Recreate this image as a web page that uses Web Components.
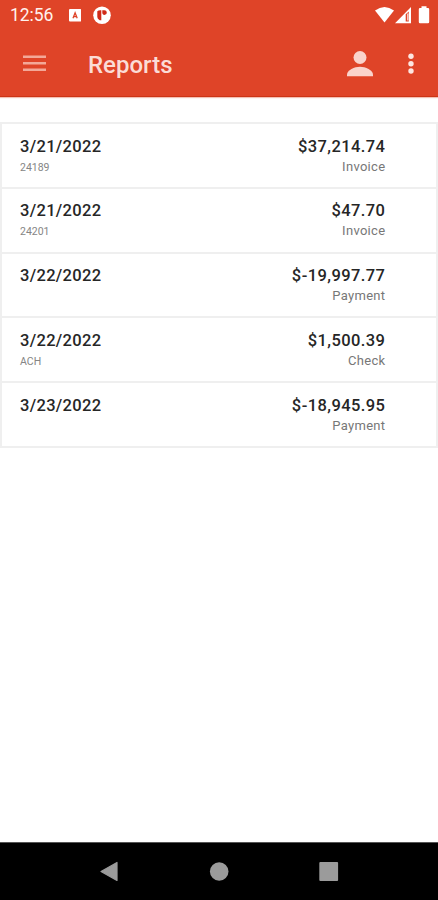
<!DOCTYPE html>
<html lang="en">
<head>
<meta charset="utf-8">
<title>Reports</title>
<style>
html,body{margin:0;height:100%;background:#fff}
body{font-family:Roboto,"Liberation Sans",sans-serif;overflow:hidden}
</style>
</head>
<body>
<reports-screen></reports-screen>
<script>
const define = (name, html) => customElements.define(name, class extends HTMLElement {
  constructor() {
    super();
    const t = document.createElement('template');
    t.innerHTML = html;
    this.attachShadow({ mode: 'open' }).append(t.content.cloneNode(true));
  }
});

define('status-bar', `
<style>
:host{display:flex;align-items:center;height:31px;box-sizing:border-box;padding:0 8px 0 10px;color:#fff}
time{font-size:17.5px;line-height:31px;width:59px;letter-spacing:-.05px;color:#fff2ee}
svg{display:block}
.app{margin-right:12px}
.right{margin-left:auto}
</style>
<time>12:56</time>
<svg class="app" width="12" height="31" viewBox="0 0 12 31"><rect y="9" width="12.300" height="12.500" rx="1" fill="#fff"/><path d="M4 18.300 6.100 12.800 8.200 18.300M4.900 16.700h2.400" fill="none" stroke="#de4428" stroke-width="1.300"/></svg>
<svg width="18" height="31" viewBox="0 0 18 31"><circle cx="9" cy="15.2" r="8.8" fill="#fff"/><path d="M4.300 11.300Q5.500 10 8.300 10.300v10H6.700Q4.300 19 4.300 17z" fill="#d02a18"/><path d="M9.300 10.300h2.200a2.300 2.300 0 1 1-2.200 3z" fill="#d02a18"/></svg>
<svg class="right" width="56" height="31" viewBox="374 0 56 31" fill="#fff"><path d="M375 10.500Q384.500 3.500 394 10.500L384.500 22.500z"/><path fill-rule="evenodd" d="M411 7v16.300H395zM405.700 14.200v7.300h3.100V11.500z"/><path d="M407.300 13.500h1.100v7h-1.100z"/><path d="M421.500 8v-1.700h5V8h1.500q1.200 0 1.200 1.200v12.700q0 1.300-1.200 1.300h-8q-1.200 0-1.200-1.300V9.200Q418.800 8 420 8z"/></svg>
`);

define('app-bar', `
<style>
:host{display:flex;align-items:center;height:66px;box-sizing:border-box;padding:1px 20px 0 22px;border-bottom:1px solid #cc3516}
h1{margin:0 auto 0 42px;font-size:24px;line-height:64px;font-weight:500;color:#fbdcd6;padding-top:1px}
svg{display:block}
.user{margin-right:33px}
</style>
<svg width="24" height="20" viewBox="0 0 24 20" fill="#f3a898"><path d="M1 1.400h23v2.500H1zM1 7.900h23v2.500H1zM1 14.400h23v2.500H1z"/></svg>
<h1>Reports</h1>
<svg class="user" width="26" height="26" viewBox="0 0 26 26" fill="#fad3cb"><circle cx="13" cy="6.500" r="6.500"/><path d="M0 25.200v-1.500c0-4.700 7.500-8 13-8s13 3.300 13 8v1.500z"/></svg>
<svg width="12" height="24" viewBox="0 0 12 24" fill="#fde6e1"><circle cx="5" cy="4.300" r="2.700"/><circle cx="5" cy="11.700" r="2.700"/><circle cx="5" cy="19" r="2.700"/></svg>
`);

define('report-row', `
<style>
:host{display:flex;justify-content:space-between;height:64.800px;box-sizing:border-box;padding:12.600px 51px 0 18px;border-bottom:2px solid #efefef}
.main{font-size:16.500px;line-height:20px;font-weight:500;color:#262626;letter-spacing:.32px}
.ref{font-size:10.500px;line-height:21px;color:#858585}
.kind{font-size:13px;line-height:20px;color:#777;letter-spacing:.3px}
.end{text-align:right}
.end .main{letter-spacing:.42px}
.end .main,.end .kind{margin-right:-.4px}
</style>
<div><div class="main"><slot name="date"></slot></div><div class="ref"><slot name="ref"></slot></div></div>
<div class="end"><div class="main"><slot name="amount"></slot></div><div class="kind"><slot></slot></div></div>
`);

define('report-list', `
<style>:host{display:block;margin-top:25px;border:2px solid #efefef;border-bottom:0}</style>
<slot></slot>
`);

define('nav-bar', `
<style>
:host{display:flex;align-items:center;justify-content:space-between;height:58px;box-sizing:border-box;padding:0 99px;background:#000;border-top:1px solid #555}
svg{display:block}
</style>
<svg width="20" height="22" viewBox="0 0 20 22"><path d="M2 10.500 18 1.500v18z" fill="#9b9b9b" stroke="#9b9b9b" stroke-width="1.200" stroke-linejoin="round"/></svg>
<svg width="20" height="22" viewBox="0 0 20 22"><circle cx="10.200" cy="10.500" r="9.300" fill="#9b9b9b"/></svg>
<svg width="20" height="22" viewBox="0 0 20 22"><rect x=".3" y="1" width="18.800" height="19" rx="1" fill="#9b9b9b"/></svg>
`);

define('reports-screen', `
<style>
:host{display:flex;flex-direction:column;height:900px;width:438px;background:#fff}
header{background:#df4428;box-shadow:0 1px 1px #f3c0b5}
nav-bar{margin-top:auto}
</style>
<header><status-bar></status-bar><app-bar></app-bar></header>
<report-list>
<report-row><span slot="date">3/21/2022</span><span slot="ref">24189</span><span slot="amount">$37,214.74</span>Invoice</report-row>
<report-row><span slot="date">3/21/2022</span><span slot="ref">24201</span><span slot="amount">$47.70</span>Invoice</report-row>
<report-row><span slot="date">3/22/2022</span><span slot="amount">$-19,997.77</span>Payment</report-row>
<report-row><span slot="date">3/22/2022</span><span slot="ref">ACH</span><span slot="amount">$1,500.39</span>Check</report-row>
<report-row><span slot="date">3/23/2022</span><span slot="amount">$-18,945.95</span>Payment</report-row>
</report-list>
<nav-bar></nav-bar>
`);
</script>
</body>
</html>
